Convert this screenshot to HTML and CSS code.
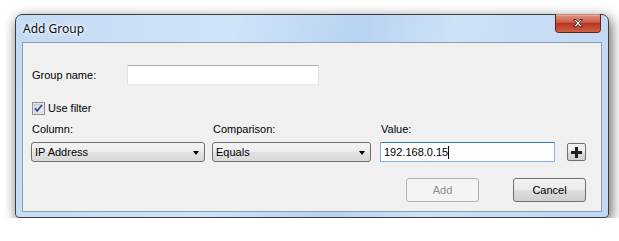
FILE: index.html
```html
<!DOCTYPE html>
<html lang="en">

<head>
    <meta charset="UTF-8">
    <title>Add Group</title>
    <link rel="stylesheet" href="styles.css">
</head>

<body>

    <div class="window">
        <!-- Title Bar -->
        <div class="titlebar">
            <span class="title">Add Group</span>
            <button class="close-btn" title="Close">
                <svg width="46" height="19" viewBox="0 0 46 19">
                    <defs>
                        <linearGradient id="closeFill" x1="0" y1="0" x2="0" y2="1">
                            <stop offset="0" stop-color="#e59a8a" />
                            <stop offset="0.45" stop-color="#cc5f49" />
                            <stop offset="0.5" stop-color="#b8351f" />
                            <stop offset="1" stop-color="#cd6347" />
                        </linearGradient>
                    </defs>
                    <path d="M0.5 0 H45.5 V15.5 Q45.5 18.5 42.5 18.5 H3.5 Q0.5 18.5 0.5 15.5 Z" fill="url(#closeFill)" stroke="#5e2219" />
                    <path d="M1.5 1 H44.5" stroke="#f0bcb0" />
                    <path d="M18.5 5.5 L21 5.5 L23 7.8 L25 5.5 L27.5 5.5 L24.3 9.2 L27.5 12.8 L25 12.8 L23 10.6 L21 12.8 L18.5 12.8 L21.7 9.2 Z" fill="#ffffff" stroke="#4a2a26" stroke-width="1" stroke-linejoin="round" />
                </svg>
            </button>
        </div>

        <!-- Client Area -->
        <div class="client">
            <div class="name-row">
                <span class="label name-label">Group name:</span>
                <input type="text" class="textbox name-box">
            </div>

            <div class="check-row">
                <span class="checkbox">
                    <svg width="13" height="13" viewBox="0 0 13 13">
                        <defs>
                            <linearGradient id="boxFill" x1="0" y1="0" x2="1" y2="1">
                                <stop offset="0" stop-color="#cbcfd5" />
                                <stop offset="1" stop-color="#f6f6f6" />
                            </linearGradient>
                        </defs>
                        <rect x="0.5" y="0.5" width="12" height="12" fill="#f4f4f4" stroke="#8f8f8f" />
                        <rect x="2" y="2" width="9" height="9" fill="url(#boxFill)" stroke="#b7bcc4" stroke-width="0.6" />
                        <path d="M3 6.3 L5.2 8.8 L10 3" fill="none" stroke="#2f4f94" stroke-width="1.8" />
                    </svg>
                </span>
                <span class="label">Use filter</span>
            </div>

            <div class="filter-row">
                <div class="field field-column">
                    <span class="label">Column:</span>
                    <div class="combo">IP Address<span class="arrow"></span></div>
                </div>
                <div class="field field-compare">
                    <span class="label">Comparison:</span>
                    <div class="combo">Equals<span class="arrow"></span></div>
                </div>
                <div class="field field-value">
                    <span class="label">Value:</span>
                    <div class="textbox value-box">192.168.0.15<span class="caret"></span></div>
                </div>
                <button class="plus-btn" title="Add filter">
                    <svg width="11" height="11" viewBox="0 0 11 11">
                        <path d="M4 0 H7 V4 H11 V7 H7 V11 H4 V7 H0 V4 H4 Z" fill="#1e1e1e" />
                    </svg>
                </button>
            </div>

            <div class="actions">
                <button class="btn" disabled>Add</button>
                <button class="btn">Cancel</button>
            </div>
        </div>
    </div>

</body>

</html>
```

FILE: styles.css
```css
/* Global Reset */
* {
    margin: 0;
    padding: 0;
    box-sizing: border-box;
}

/* Body */
body {
    font-family: 'Liberation Sans', Arial, sans-serif;
    font-size: 11px;
    color: #000;
    background-color: #fff;
    padding: 14px 0 0 15px;
}

/* Window Frame */
.window {
    width: 594px;
    height: 204px;
    border: 1px solid #3a3f47;
    border-radius: 7px 7px 4px 4px;
    background: linear-gradient(100deg, #c4dbf4 0%, #cfe3f9 35%, #b7d3f1 55%, #cde1f7 70%, #c0d8f3 100%);
    box-shadow: 2px 4px 13px rgba(0, 0, 0, 0.65);
    padding: 0 6px 5px 6px;
    display: flex;
    flex-direction: column;
}

/* Title Bar */
.titlebar {
    height: 27px;
    display: flex;
    justify-content: space-between;
    align-items: flex-start;
    padding-left: 1px;
}

.title {
    font-family: 'Noto Sans', 'Open Sans', sans-serif;
    font-size: 12px;
    line-height: 28px;
    color: #111;
    text-shadow: 0 0 6px #fff, 0 0 3px #fff;
}

.close-btn {
    width: 46px;
    height: 19px;
    border: none;
    background: none;
    margin-top: -1px;
    margin-right: 1px;
    display: block;
}

.close-btn svg {
    display: block;
}

/* Client Area */
.client {
    flex: 1;
    background-color: #f0f0f0;
    border: 1px solid #8d9db2;
    padding: 22px 15px 0 9px;
    display: flex;
    flex-direction: column;
}

.label {
    line-height: 13px;
    white-space: nowrap;
}

/* Group Name Row */
.name-row {
    display: flex;
    align-items: center;
    height: 20px;
}

.name-label {
    width: 95px;
}

.textbox {
    height: 20px;
    background-color: #fff;
    border: 1px solid #e2e3ea;
    border-top-color: #abadb3;
    border-bottom-color: #e3e9ef;
    font-family: inherit;
    font-size: 11px;
    outline: none;
}

.name-box {
    width: 192px;
}

/* Checkbox Row */
.check-row {
    display: flex;
    align-items: center;
    gap: 3px;
    margin-top: 17px;
    height: 13px;
}

.checkbox,
.checkbox svg {
    display: block;
}

/* Filter Row */
.filter-row {
    display: flex;
    align-items: flex-end;
    margin-top: 8px;
}

.field {
    display: flex;
    flex-direction: column;
    gap: 6px;
}

.field .label {
    padding-left: 1px;
}

.field-column {
    width: 174px;
    margin-left: -1px;
}

.field-compare {
    width: 159px;
    margin-left: 7px;
}

.field-value {
    width: 175px;
    margin-left: 9px;
}

.combo {
    position: relative;
    height: 20px;
    line-height: 18px;
    padding-left: 3px;
    border: 1px solid #707070;
    border-radius: 3px;
    background: linear-gradient(#f4f4f4 0%, #ececec 50%, #e2e2e2 51%, #d8d8d8 100%);
}

.arrow {
    position: absolute;
    right: 5px;
    top: 8px;
    width: 0;
    height: 0;
    border-left: 3.5px solid transparent;
    border-right: 3.5px solid transparent;
    border-top: 4px solid #000;
}

.value-box {
    border: 1px solid #7eb4ea;
    border-top-color: #3d7bad;
    border-radius: 1px;
    line-height: 18px;
    padding-left: 3px;
    display: flex;
    align-items: center;
}

.caret {
    display: inline-block;
    width: 1px;
    height: 13px;
    background-color: #000;
}

.plus-btn {
    width: 19px;
    height: 18px;
    margin-left: 12px;
    margin-bottom: 1px;
    border: 1px solid #707070;
    border-radius: 2px;
    background: linear-gradient(#f2f2f2 0%, #ebebeb 50%, #dddddd 51%, #cfcfcf 100%);
    display: flex;
    justify-content: center;
    align-items: center;
}

.plus-btn svg {
    display: block;
}

/* Action Buttons */
.actions {
    display: flex;
    justify-content: flex-end;
    gap: 34px;
    margin-top: 16px;
}

.btn {
    width: 73px;
    height: 24px;
    font-family: inherit;
    font-size: 11px;
    color: #000;
    border: 1px solid #707070;
    border-radius: 3px;
    background: linear-gradient(#f2f2f2 0%, #ebebeb 50%, #dddddd 51%, #cfcfcf 100%);
}

.btn:disabled {
    color: #8d8d8d;
    border-color: #adb2b5;
    background: #f4f4f4;
}
```
